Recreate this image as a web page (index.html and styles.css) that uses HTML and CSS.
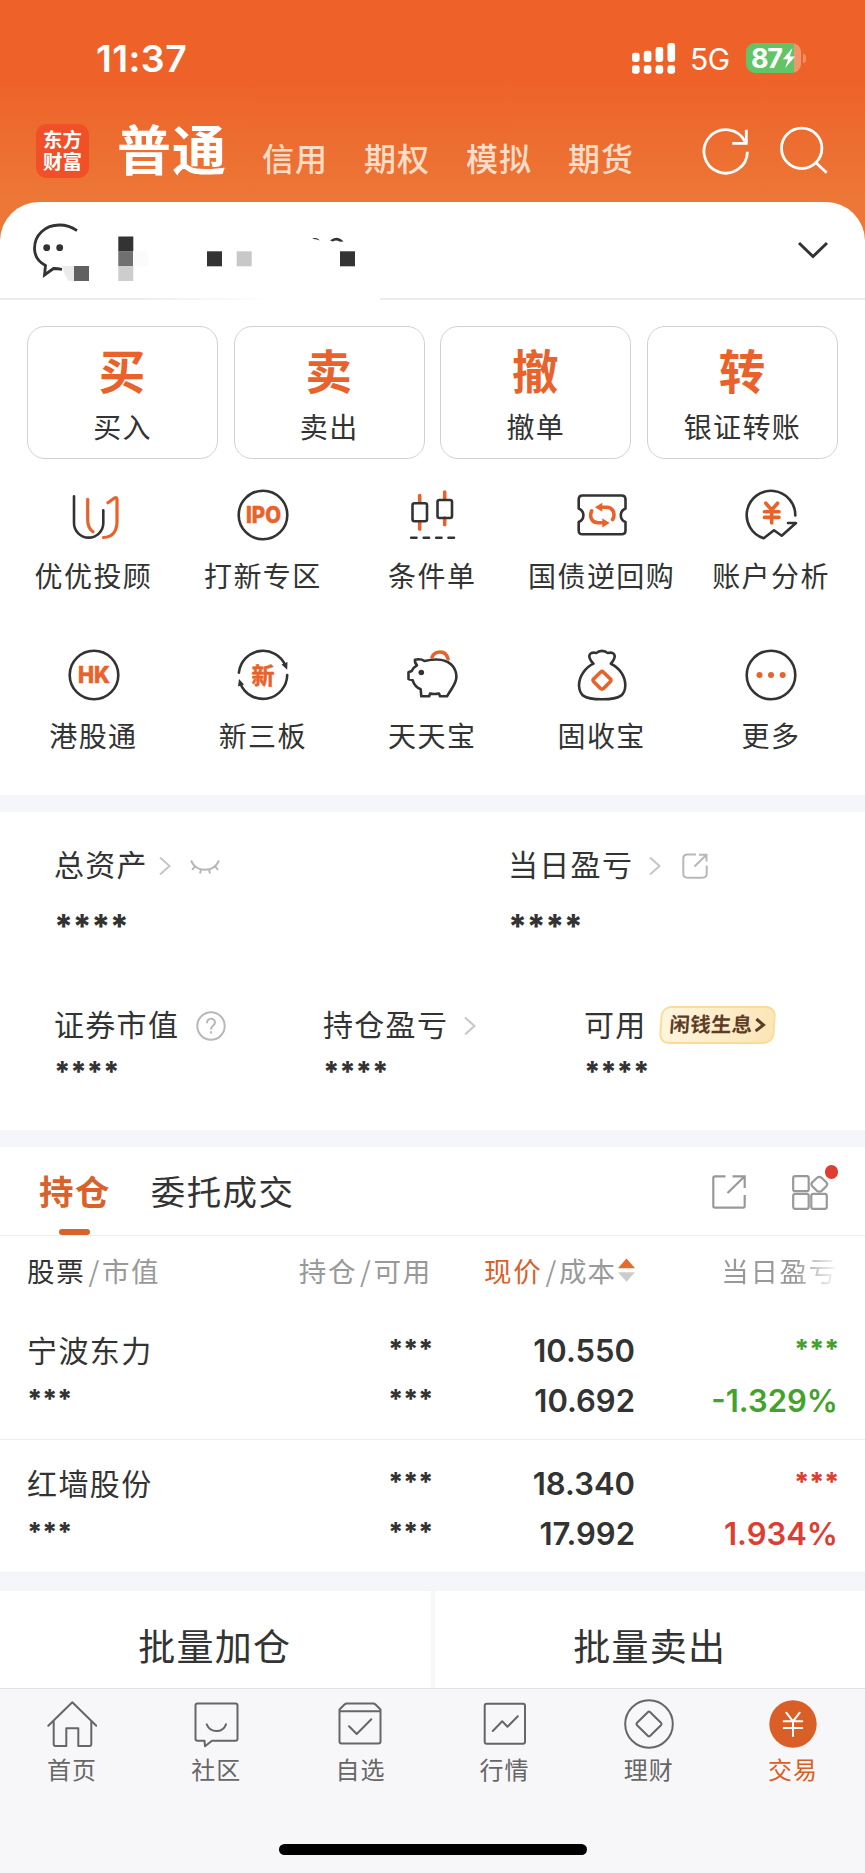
FILE: index.html
```html
<!DOCTYPE html>
<html lang="zh-CN">
<head>
<meta charset="utf-8">
<title>交易</title>
<link rel="stylesheet" href="styles.css">
</head>
<body>
<div class="top">
  <div class="status">
    <span class="time">11:37</span>
    <svg class="signal" width="44" height="31" viewBox="0 0 44 31" fill="#fff"><rect x="0" y="9.7" width="7.6" height="9.3" rx="2.4"/><rect x="11.8" y="7.7" width="7.6" height="11.3" rx="2.4"/><rect x="23.6" y="4" width="7.6" height="15" rx="2.4"/><rect x="35.5" y="0" width="7.6" height="19" rx="2.4"/><rect x="0" y="22.3" width="7.6" height="8.4" rx="2.4"/><rect x="11.8" y="22.3" width="7.6" height="8.4" rx="2.4"/><rect x="23.6" y="22.3" width="7.6" height="8.4" rx="2.4"/><rect x="35.5" y="22.3" width="7.6" height="8.4" rx="2.4"/></svg>
    <span class="net">5G</span>
    <div class="battery"><span>87</span><svg width="14" height="22" viewBox="0 0 14 22"><path d="M10.5 1 .8 12.2H6L3.2 21 13 9.4H7.8Z" fill="#fff"/></svg></div>
    <i class="nub"></i>
  </div>
  <div class="nav">
    <div class="logo">东方<br>财富</div>
    <b class="current">普通</b>
    <span class="mode">信用</span><span class="mode">期权</span><span class="mode">模拟</span><span class="mode">期货</span>
    <svg class="refresh" width="52" height="52" viewBox="0 0 52 52" fill="none" stroke="#fff" stroke-width="2.8"><path d="M47.4 27.7A21.7 21.7 0 1 1 45 17.5"/><path d="M46.3 5.7V19.3H32.3"/></svg>
    <svg class="search" width="52" height="52" viewBox="0 0 52 52" fill="none" stroke="#fff" stroke-width="2.8"><circle cx="23.7" cy="24.3" r="20.2"/><path d="M38 38.7 48.7 48.8"/></svg>
  </div>
</div>

<div class="sheet">
  <div class="account">
    <svg width="433" height="96" viewBox="0 0 433 96">
      <g fill="none" stroke="#333" stroke-width="2.8"><path d="M77 28.7C71 24.5 65 23 59.5 23 45 23 34.5 33 34.5 46.500C34.5 53 38 59.500 45.500 63.500L44.500 73 53.500 66.500Q58 66.800 62 67.300"/></g>
      <g fill="#333"><circle cx="46.700" cy="45.700" r="3.400"/><circle cx="59.700" cy="45.700" r="3.400"/></g>
      <path d="M62 64H74V79H69Q65 75 62 64" fill="#ebebeb"/>
      <rect x="74" y="64" width="15" height="15" fill="#616161"/>
      <rect x="118.300" y="34.500" width="15" height="15" fill="#333"/><rect x="118.300" y="49.300" width="15" height="15" fill="#707070"/><rect x="118.300" y="64" width="15" height="15" fill="#cdcdcd"/><rect x="133" y="49.300" width="15" height="15" fill="#fbfbfb"/>
      <rect x="207" y="49.300" width="15" height="15" fill="#333"/><rect x="236.700" y="49.300" width="15" height="15" fill="#c8c8c8"/><rect x="340" y="49.300" width="15" height="15" fill="#333"/>
      <path d="M330 38.500Q337 32.500 343.500 39.500L340 39.800Q336 37.500 333 39.500ZM312 37Q316 34.500 320 38.500Q316 36.500 312 37" fill="#333"/>
    </svg>
    <svg class="down" width="32" height="20" viewBox="0 0 32 20" fill="none" stroke="#333" stroke-width="3"><path d="M2 2 16 15.500 30 2"/></svg>
  </div>
  <div class="rule"></div>

  <div class="actions">
    <div class="action"><b>买</b><span>买入</span></div>
    <div class="action"><b>卖</b><span>卖出</span></div>
    <div class="action"><b>撤</b><span>撤单</span></div>
    <div class="action"><b>转</b><span>银证转账</span></div>
  </div>

  <div class="tools">
    <div class="tool"><svg class="ic" viewBox="0 0 52 52"><path class="d" d="M6 7.300V34A14.650 14.650 0 0 0 35.300 34V21.300"/><path class="o w3" d="M19.700 10.300V31Q19.700 39 25 42.700M40 13.700 46.500 9Q49 7.800 49 10.500V34Q48 48 35.500 48.500"/></svg><span>优优投顾</span></div>
    <div class="tool"><svg class="ic" viewBox="0 0 52 52"><circle class="d" cx="26" cy="26" r="24.300"/><text x="26.500" y="34.300" textLength="35" lengthAdjust="spacingAndGlyphs">IPO</text></svg><span>打新专区</span></div>
    <div class="tool"><svg class="ic" viewBox="0 0 52 52"><path class="o w35" d="M13.700 6.500V13M13.700 33V40.300M38.700 3V10M38.700 29V35.700"/><rect class="d" x="6.500" y="14.300" width="14.500" height="18" rx="2"/><rect class="d" x="31.500" y="11" width="14.500" height="18" rx="2"/><path class="d" d="M5.200 48.700H10.500M17.700 48.700H23M30.200 48.700H35.500M42.500 48.700H48"/></svg><span>条件单</span></div>
    <div class="tool"><svg class="ic" viewBox="0 0 52 52"><path class="d" d="M6.500 6.500H45.500Q49.500 6.500 49.500 10.500V19.500C46 21 44.800 23.300 44.800 26.300S46 31.800 49.500 33V41.500Q49.500 45.300 45.500 45.300H6.500Q2.700 45.300 2.700 41.500V33C6 31.800 7.400 29.300 7.400 26.300S6 21 2.700 19.500V10.500Q2.700 6.500 6.500 6.500Z"/><path class="o w35" d="M15.700 21.800C13 28 16 33.700 22 33.700H28M36.600 30.500C40 24.500 36.500 18.300 31 18.300H25"/><path class="f" d="M26.300 29.300 33.700 33.900 26.300 38.500ZM26.300 13.700 18.900 18.200 26.300 22.700Z"/></svg><span>国债逆回购</span></div>
    <div class="tool"><svg class="ic" viewBox="0 0 52 52"><path class="d" d="M50.300 26.500A24.300 24.300 0 1 0 18.700 49.300L29 41.300 36.700 46.700 51 34H43"/><path class="o w35" d="M20.800 14.200 26.700 21 32.600 14.200M26.700 21V34M19.500 22.700H34M19.500 28.400H34"/></svg><span>账户分析</span></div>
    <div class="tool"><svg class="ic" viewBox="0 0 52 52"><circle class="d" cx="26" cy="26" r="24.300"/><text x="26" y="34.300" textLength="32" lengthAdjust="spacingAndGlyphs">HK</text></svg><span>港股通</span></div>
    <div class="tool"><svg class="ic" viewBox="0 0 52 52"><path class="d" d="M1.900 23.700A24.300 24.300 0 0 1 48.400 16.500M50.200 26A24.300 24.300 0 0 1 3.500 35"/><path fill="#333" d="M44.500 15.500 50.500 13 50.200 20.700ZM1 37.500 2 30 7 35.500Z"/><text class="cn" x="26" y="34.500">新</text></svg><span>新三板</span></div>
    <div class="tool"><svg class="ic" viewBox="0 0 52 52"><path class="d" d="M9 10.700Q15 9.500 18.500 12 26 10.300 31 10.500C43 10.700 50.400 18 50.400 28Q50.400 32 46.500 38.500L41 47.300H34L33 44.500Q28 45.500 24 44.500L23.300 47.300H15.300L14.700 40.300Q8.500 37.500 6.700 31.300L2.500 30V23.300L5.700 22Q7 18.500 11 16.300Q8.500 14 9 10.700Z"/><circle cx="15.300" cy="23.500" r="2.800" fill="#333"/><path class="o w35" d="M26 8.200C29 1.500 40 .5 42 10"/></svg><span>天天宝</span></div>
    <div class="tool"><svg class="ic" viewBox="0 0 52 52"><path class="d" d="M17.500 14.700C13.500 11 12.500 7 14 5Q16 2.800 20.500 4C23 1.200 29 1.200 31.500 4Q36 2.800 38 5C39.500 7 38.500 11 34.800 14.700C43 18.500 49.500 27 49.300 36.500C49 45 46 50.300 26 50.300S3.500 45 3 36.500C3 27 9.500 18.500 17.500 14.700Z"/><path class="o w35" d="M24.500 23.200Q26 21.800 27.500 23.200L34.200 29.800Q35.600 31.300 34.200 32.800L27.500 39.500Q26 40.800 24.500 39.500L17.800 32.800Q16.400 31.300 17.800 29.800Z"/></svg><span>固收宝</span></div>
    <div class="tool"><svg class="ic" viewBox="0 0 52 52"><circle class="d" cx="26" cy="26" r="24.300"/><g class="f"><circle cx="14.500" cy="26" r="3"/><circle cx="26" cy="26" r="3"/><circle cx="37.700" cy="26" r="3"/></g></svg><span>更多</span></div>
  </div>
</div>

<div class="band"></div>

<div class="assets">
  <div class="totals">
    <div class="stat"><div class="name"><span>总资产</span><svg class="chev" width="12" height="20" viewBox="0 0 12 20"><path d="M1 1.500 10.500 10 1 18.500"/></svg><svg class="eye" width="30" height="20" viewBox="0 0 30 20"><path d="M1 4.500Q5 13.800 15 13.800T29 4.500M5 10 2.200 14M11 13.500 10 17.500M19 13.500 20 17.500M25 10 28 14"/></svg></div><div class="stars big">****</div></div>
    <div class="stat"><div class="name"><span>当日盈亏</span><svg class="chev far" width="12" height="20" viewBox="0 0 12 20"><path d="M1 1.500 10.500 10 1 18.500"/></svg><svg class="share" width="26" height="26" viewBox="0 0 26 26"><path d="M14 1.500H5.500Q1.300 1.500 1.300 5.500V20.500Q1.300 24.700 5.500 24.700H20.500Q24.700 24.700 24.700 20.500V12.500M12.500 13.500 24 2.200M17 1.800H24.500V8.500"/></svg></div><div class="stars big">****</div></div>
  </div>
  <div class="details">
    <div class="stat"><div class="name"><span>证券市值</span><svg class="help" width="30" height="30" viewBox="0 0 30 30"><circle cx="15" cy="15" r="13.700"/><path d="M11 12.300C11 6.500 19 6.500 19 11.500 19 14.500 15 14.800 15 18.500M15 20.300V22.500"/></svg></div><div class="stars mid">****</div></div>
    <div class="stat"><div class="name"><span>持仓盈亏</span><svg class="chev far" width="12" height="20" viewBox="0 0 12 20"><path d="M1 1.500 10.500 10 1 18.500"/></svg></div><div class="stars mid">****</div></div>
    <div class="stat"><div class="name"><span>可用</span><div class="pill"><span>闲钱生息</span><svg width="12" height="16" viewBox="0 0 12 16"><path d="M2 2 9.500 8 2 14"/></svg></div></div><div class="stars mid">****</div></div>
  </div>
</div>

<div class="band"></div>

<div class="tabs">
  <div class="tab on">持仓</div>
  <div class="tab">委托成交</div>
  <svg class="open" width="34" height="34" viewBox="0 0 34 34" fill="none" stroke="#999" stroke-width="2.200"><path d="M13.500 1.300H3Q1.300 1.300 1.300 3V31Q1.300 32.700 3 32.700H31Q32.700 32.700 32.700 31V20M15.500 18 32.500 1.500M20.500 1.300H32.700V13"/></svg>
  <div class="modules"><svg width="37" height="35" viewBox="0 0 37 35" fill="none" stroke="#999" stroke-width="2.200"><rect x="1.200" y="1.200" width="15.500" height="15" rx="2"/><rect x="1.200" y="18.800" width="15.500" height="15" rx="2"/><rect x="19.300" y="18.800" width="15.500" height="15" rx="2"/><path d="M25 2.800Q27.300 1 29.600 2.800L34.300 7.300Q36 9.300 34.300 11.300L29.600 15.800Q27.300 17.600 25 15.800L20.300 11.300Q18.600 9.300 20.300 7.300Z"/></svg><i></i></div>
</div>

<div class="table">
  <div class="row head">
    <div><em class="dark">股票</em><em class="sl">/</em><em>市值</em></div>
    <div><em>持仓</em><em class="sl">/</em><em>可用</em></div>
    <div><em class="hot">现价</em><em class="sl">/</em><em class="end">成本</em><svg width="17" height="24" viewBox="0 0 17 24"><path d="M0 10.300 8.500.500 17 10.300Z" fill="#e86a2b"/><path d="M0 14.300H17L8.500 23.700Z" fill="#ccc"/></svg></div>
    <div class="fade">当日盈亏</div>
  </div>
  <div class="row stock">
    <div><p class="title">宁波东力</p><p class="stars sm">***</p></div>
    <div><p class="stars sm">***</p><p class="stars sm">***</p></div>
    <div><p>10.550</p><p>10.692</p></div>
    <div class="green"><p class="stars sm">***</p><p>-1.329%</p></div>
  </div>
  <div class="row stock last">
    <div><p class="title">红墙股份</p><p class="stars sm">***</p></div>
    <div><p class="stars sm">***</p><p class="stars sm">***</p></div>
    <div><p>18.340</p><p>17.992</p></div>
    <div class="red"><p class="stars sm">***</p><p>1.934%</p></div>
  </div>
</div>

<div class="band tall"></div>

<div class="batch"><div>批量加仓</div><div>批量卖出</div></div>

<div class="bar">
  <div class="items">
    <div class="item"><svg class="ti" viewBox="0 0 50 50"><path d="M1.300 26.700 25.300 3.300 49.300 26.700M6.700 22V45Q6.700 47 8.500 47H19.300V29.300H31.300V47H42.500Q44.300 47 44.300 45V22"/></svg><span>首页</span></div>
    <div class="item"><svg class="ti" viewBox="0 0 50 50"><path d="M6.500 4.500H44.500Q46.500 4.500 46.500 6.500V39.700Q46.500 41.700 44.500 41.700H21L14 47.300 13.500 41.700H6.500Q4.500 41.700 4.500 39.700V6.500Q4.500 4.500 6.500 4.500ZM15.700 25.300Q18.500 32 25.500 32T35 25.300"/></svg><span>社区</span></div>
    <div class="item"><svg class="ti" viewBox="0 0 50 50"><path d="M4.500 12.200V10.500L9.500 5.500Q10.500 4.500 12 4.500H38Q39.500 4.500 40.500 5.500L45.500 10.500V42.500Q45.500 44.500 43.500 44.500H6.500Q4.500 44.500 4.500 42.500ZM4.500 12.200H45.500M14 27.300 21.700 35 36.300 20.300"/></svg><span>自选</span></div>
    <div class="item"><svg class="ti" viewBox="0 0 50 50"><rect x="4.700" y="4.700" width="40.300" height="40" rx="2"/><path d="M12.800 32 22.200 22.300 27.500 27.700 37.800 17.300"/></svg><span>行情</span></div>
    <div class="item"><svg class="ti" viewBox="0 0 50 50"><circle cx="25" cy="25" r="23.800"/><path d="M24 13Q25 12.200 26 13L37.200 24Q38 25 37.200 26L26 37Q25 37.800 24 37L12.800 26Q12 25 12.800 24Z"/></svg><span>理财</span></div>
    <div class="item on"><svg class="ti" viewBox="0 0 50 50"><circle cx="25" cy="25" r="23.700" fill="#da5f26" stroke="none"/><path stroke="#fff" d="M18.300 13.700 25 22.300 31.700 13.700M25 22.300V37M15.700 22.300H34.300M15.700 29H34.300"/></svg><span>交易</span></div>
  </div>
  <div class="home"></div>
</div>
</body>
</html>
```
FILE: styles.css
```css
* { box-sizing: border-box; }
body {
  margin: 0;
  width: 865px;
  height: 1873px;
  overflow: hidden;
  background: #fff;
  color: #333;
  font-family: "Noto Sans CJK SC", sans-serif;
}
svg { display: block; flex: none; }
p { margin: 0; }
em { font-style: normal; }

.top {
  height: 250px;
  background: linear-gradient(#ee622a 0, #ee622a 80px, #ec7737 200px);
  color: #fff;
}
.status {
  height: 116px;
  padding: 0 59px 0 96px;
  display: flex;
  align-items: center;
  font-family: Inter, sans-serif;
}
.time { font-size: 37.500px; font-weight: 600; letter-spacing: 0.400px; margin-right: auto; }
.net { font-size: 30px; margin: 2px 15px 0 14px; letter-spacing: -0.5px; width: 41px; }
.battery {
  width: 55px;
  height: 30px;
  border-radius: 9px;
  background: linear-gradient(90deg, #62c466 48px, #f2956b 48px);
  display: flex;
  align-items: center;
  padding-left: 5px;
  font-size: 27px;
  font-weight: 700;
  letter-spacing: -1.2px;
}
.nub { width: 3px; height: 9px; margin-left: 2px; border-radius: 0 3px 3px 0; background: #f0905f; }

.nav { display: flex; height: 70px; padding-left: 36px; line-height: 48px; }
.logo {
  width: 53px;
  height: 54px;
  margin: 8px 28px 0 0;
  padding-top: 4px;
  border-radius: 11px;
  background: #f04f27;
  font-size: 19.500px;
  font-weight: 700;
  line-height: 22px;
  text-align: center;
}
.current { font-size: 54px; font-weight: 700; letter-spacing: 1px; margin: 8px 34px 0 0; }
.mode { font-size: 32px; font-weight: 500; letter-spacing: 1px; color: #ffdcc6; margin: 17px 36px 0 0; width: 66px; }
.mode:nth-of-type(1) { margin-left: 1px; }
.refresh { margin: 8px 26px 0 30px; }
.search { margin-top: 8px; }

.sheet { margin-top: -48px; background: #fff; border-radius: 39px 39px 0 0; height: 593px; }
.account { height: 96px; display: flex; justify-content: space-between; }
.down { margin: 39px 36px 0 0; }
.rule { height: 2px; background: linear-gradient(90deg, #ededed 140px, #fff 272px, #fff 380px, #ededed 380px); }

.actions { display: grid; grid-template-columns: repeat(4, 1fr); gap: 15.500px; padding: 26px 27px 0; }
.action {
  height: 133px;
  border: 1px solid #d2d2d2;
  border-radius: 18px;
  display: flex;
  flex-direction: column;
  align-items: center;
}
.action b { font-size: 46.500px; font-weight: 700; line-height: 50px; color: #e9622b; margin: 17px 1px 0 0; }
.action span { font-size: 28px; letter-spacing: 1.400px; line-height: 40px; margin-top: 12px; }

.tools { display: grid; grid-template-columns: repeat(5, 1fr); padding: 29.500px 9px 0; grid-auto-rows: 160px; }
.tool { display: flex; flex-direction: column; align-items: center; }
.tool span { font-size: 28px; letter-spacing: 1.400px; line-height: 40px; margin: 14px 0.600px 0 0; white-space: nowrap; }
.ic { width: 52px; height: 52px; fill: none; overflow: visible; }
.ic .d { stroke: #333; stroke-width: 2.600; stroke-linecap: round; stroke-linejoin: round; }
.ic .o { stroke: #e9622b; stroke-linecap: round; stroke-linejoin: round; }
.ic .w3 { stroke-width: 3.200; }
.ic .w35 { stroke-width: 3.600; }
.ic .f { fill: #e9622b; }
.ic text { fill: #e9622b; stroke: #e9622b; stroke-width: 0.500; stroke-linejoin: round; font: 800 22.500px Inter, sans-serif; text-anchor: middle; }
.ic .cn { font: 700 23px "Noto Sans CJK SC", sans-serif; }

.band { height: 17px; background: #f5f6f9; }
.band.tall { height: 18px; }

.assets { height: 318px; padding: 33px 0 0 54px; }
.totals { display: grid; grid-template-columns: 454px 1fr; height: 160px; }
.details { display: grid; grid-template-columns: 269px 261px 1fr; }
.name { display: flex; align-items: center; height: 41px; font-size: 30px; letter-spacing: 1.300px; line-height: 36px; }
.name svg { fill: none; stroke: #b8b8b8; stroke-width: 2; }
.name > span { margin-top: -5px; }
.chev { margin-left: 11px; }
.name .chev { stroke: #c6c6c6; }
.chev.far { margin-left: 16px; }
.eye { margin-left: 19px; }
.share { margin-left: 21px; }
.help { margin-left: 16.500px; }
.pill {
  display: flex;
  align-items: center;
  justify-content: center;
  width: 115px;
  height: 38px;
  margin: -2px 0 0 13px;
  transform: skewX(-4deg);
  border: 2px solid #fadc92;
  border-radius: 10px;
  background: linear-gradient(100deg, #fff5df, #fbe5b6);
  color: #5e3d26;
  font-size: 20.500px;
  font-weight: 700;
  letter-spacing: 0.300px;
}
.pill span { margin-top: -4px; }
.name .pill svg { margin-left: 1px; stroke: #5e3d26; stroke-width: 3; }

.stars { font-family: Inter, sans-serif; font-weight: 800; }
.big { font-size: 33px; line-height: 40px; margin-top: 20px; letter-spacing: -0.600px; }
.mid { font-size: 28.500px; line-height: 34px; margin-top: 9px; letter-spacing: -0.300px; }

.tabs { display: flex; align-items: flex-start; height: 89px; padding-left: 39px; border-bottom: 1px solid #eee; font-size: 34.500px; letter-spacing: 1.400px; line-height: 44px; }
.tab { margin: 21px 40px 0 0; }
.tab.on { color: #d9612a; font-weight: 700; }
.tab.on::after { content: ""; display: block; width: 31px; height: 6px; margin: 17px 0 0 20px; border-radius: 3px; background: #d9612a; }
.open { margin: 28px 46px 0 auto; }
.modules { position: relative; margin: 28px 36px 0 0; }
.modules i { position: absolute; top: -10px; right: -9px; width: 13.500px; height: 13.500px; border-radius: 50%; background: #e03c31; }

.row { display: grid; grid-template-columns: 200px 205px 203px 203px; padding: 0 27px; }
.row > div { text-align: right; }
.row > div:first-child { text-align: left; }
.head { height: 71px; padding-top: 14px; font-size: 27.500px; letter-spacing: 1.700px; line-height: 40px; color: #999; }
.head > div { height: 40px; }
.head > div:nth-child(3) { display: flex; justify-content: flex-end; align-items: center; }
.head svg { margin-left: 2px; }
.head .dark { color: #333; }
.head .hot { color: #d9612a; }
.head .sl { margin: 0 1px 0 3px; }
.head .end { letter-spacing: 1px; }
.fade { -webkit-mask-image: linear-gradient(90deg, #000 160px, transparent 205px); mask-image: linear-gradient(90deg, #000 160px, transparent 205px); }
.stock { height: 133px; padding-top: 19px; border-bottom: 1px solid #eee; font: 600 31px/50px Inter, sans-serif; }
.stock p { height: 50px; }
.stock .title { font: 400 30px/46px "Noto Sans CJK SC", sans-serif; letter-spacing: 1.400px; }
.stock .sm { font-size: 26.500px; font-weight: 800; line-height: 46px; letter-spacing: -0.400px; }
.stock > div + div .sm { margin-right: -1px; }
.stock.last { border-color: #f2f2f2; }
.green { color: #43a22c; }
.red { color: #dc3e33; }

.batch { display: grid; grid-template-columns: 1fr 1fr; gap: 4px; height: 97px; background: #f7f7fa; }
.batch div { padding-top: 11px; background: #fff; text-align: center; font-size: 37px; letter-spacing: 1.300px; line-height: 86px; }
.batch div:first-child { padding-right: 1px; }

.bar { height: 185px; border-top: 1px solid #e3e3e6; background: #f7f7fa; }
.items { display: grid; grid-template-columns: repeat(6, 1fr); height: 155px; padding-top: 10px; }
.item { display: flex; flex-direction: column; align-items: center; color: #666; }
.item span { font-size: 24px; letter-spacing: 1px; line-height: 32px; margin-top: 4px; }
.item.on { color: #da5f26; }
.ti { width: 50px; height: 50px; fill: none; stroke: #666; stroke-width: 2; stroke-linecap: round; stroke-linejoin: round; }
.home { width: 308px; height: 11px; margin: 0 auto; border-radius: 6px; background: #000; }
```
